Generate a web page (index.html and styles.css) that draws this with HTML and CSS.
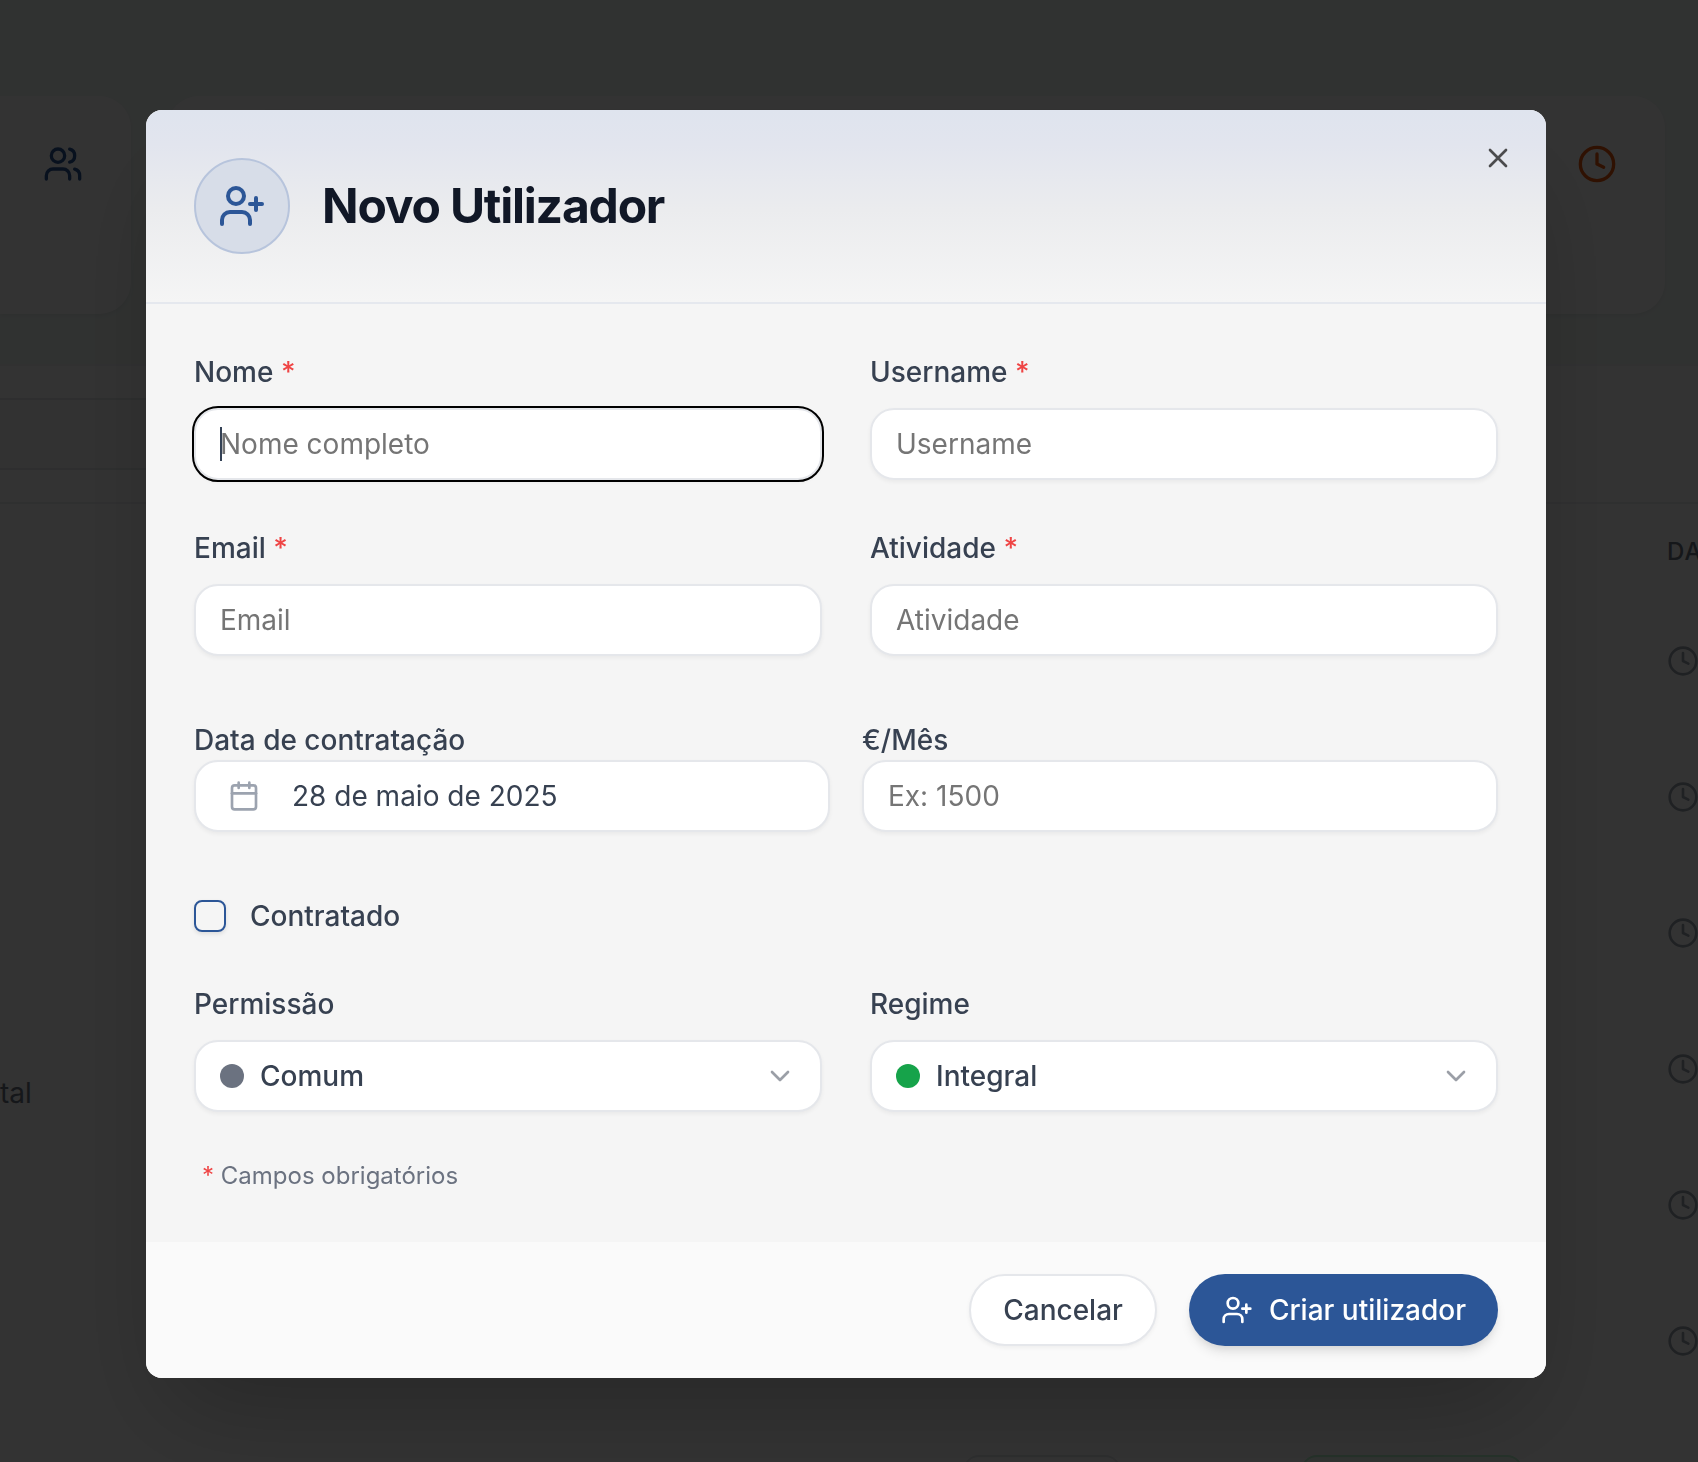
FILE: index.html
```html
<!DOCTYPE html>
<html lang="pt">
<head>
<meta charset="utf-8">
<meta name="viewport" content="width=device-width, initial-scale=1">
<title>Novo Utilizador</title>
<link rel="stylesheet" href="styles.css">
</head>
<body>
<svg class="sprite" aria-hidden="true">
  <symbol id="user-plus" viewBox="0 0 24 24"><path d="M16 21v-2a4 4 0 0 0-4-4H6a4 4 0 0 0-4 4v2"/><circle cx="9" cy="7" r="4"/><path d="M19 8v6M22 11h-6"/></symbol>
  <symbol id="users" viewBox="0 0 24 24"><path d="M16 21v-2a4 4 0 0 0-4-4H6a4 4 0 0 0-4 4v2"/><circle cx="9" cy="7" r="4"/><path d="M22 21v-2a4 4 0 0 0-3-3.87M16 3.13a4 4 0 0 1 0 7.75"/></symbol>
  <symbol id="clock" viewBox="0 0 24 24"><circle cx="12" cy="12" r="10"/><path d="M12 6v6l4 2"/></symbol>
  <symbol id="calendar" viewBox="0 0 24 24"><path d="M8 2v4M16 2v4"/><rect width="18" height="18" x="3" y="4" rx="2"/><path d="M3 10h18"/></symbol>
  <symbol id="chevron" viewBox="0 0 24 24"><path d="m6 9 6 6 6-6"/></symbol>
  <symbol id="close" viewBox="0 0 24 24"><path d="M18 6 6 18M6 6l12 12"/></symbol>
</svg>

<main class="page" inert>
  <div class="stats">
    <section class="stat stat-first"><svg class="icon icon-40 blue"><use href="#users"/></svg></section>
    <section class="stat stat-last"><svg class="icon icon-40 orange"><use href="#clock"/></svg></section>
  </div>
  <section class="panel">
    <div class="toolbar"><div class="search"></div></div>
    <table class="users">
      <thead><tr><th></th><th class="col-state"></th><th class="col-plan"></th><th class="when">DATA</th></tr></thead>
      <tbody>
        <tr><td></td><td></td><td></td><td class="when"><svg class="icon icon-32"><use href="#clock"/></svg></td></tr>
        <tr><td></td><td></td><td></td><td class="when"><svg class="icon icon-32"><use href="#clock"/></svg></td></tr>
        <tr><td></td><td></td><td></td><td class="when"><svg class="icon icon-32"><use href="#clock"/></svg></td></tr>
        <tr><td class="role">tal</td><td></td><td></td><td class="when"><svg class="icon icon-32"><use href="#clock"/></svg></td></tr>
        <tr><td></td><td></td><td></td><td class="when"><svg class="icon icon-32"><use href="#clock"/></svg></td></tr>
        <tr><td></td><td></td><td></td><td class="when"><svg class="icon icon-32"><use href="#clock"/></svg></td></tr>
        <tr><td></td><td><span class="tag tag-gray"></span></td><td><span class="tag tag-green"></span></td><td class="when"></td></tr>
      </tbody>
    </table>
  </section>
</main>

<div class="overlay">
  <form class="dialog" role="dialog" aria-modal="true" aria-labelledby="title">
    <header class="head">
      <span class="avatar"><svg class="icon icon-48"><use href="#user-plus"/></svg></span>
      <h1 id="title">Novo Utilizador</h1>
      <button class="close" type="button" aria-label="Fechar"><svg class="icon icon-32"><use href="#close"/></svg></button>
    </header>

    <div class="body">
      <div class="row">
        <div class="field">
          <label for="nome">Nome <span class="req">*</span></label>
          <input class="control" id="nome" type="text" placeholder="Nome completo" autofocus>
        </div>
        <div class="field">
          <label for="username">Username <span class="req">*</span></label>
          <input class="control" id="username" type="text" placeholder="Username">
        </div>
      </div>
      <div class="row">
        <div class="field">
          <label for="email">Email <span class="req">*</span></label>
          <input class="control" id="email" type="email" placeholder="Email">
        </div>
        <div class="field">
          <label for="atividade">Atividade <span class="req">*</span></label>
          <input class="control" id="atividade" type="text" placeholder="Atividade">
        </div>
      </div>
      <div class="row row-tight">
        <div class="field">
          <label for="data">Data de contratação</label>
          <button class="control date" id="data" type="button"><svg class="icon icon-32"><use href="#calendar"/></svg>28 de maio de 2025</button>
        </div>
        <div class="field">
          <label for="salario">€/Mês</label>
          <input class="control" id="salario" type="text" inputmode="decimal" placeholder="Ex: 1500">
        </div>
      </div>
      <div class="check">
        <input id="contratado" type="checkbox">
        <label for="contratado">Contratado</label>
      </div>
      <div class="row">
        <div class="field">
          <label for="permissao">Permissão</label>
          <div class="select">
            <span class="dot"></span>
            <select class="control" id="permissao"><option>Comum</option></select>
            <svg class="icon icon-32"><use href="#chevron"/></svg>
          </div>
        </div>
        <div class="field">
          <label for="regime">Regime</label>
          <div class="select">
            <span class="dot dot-green"></span>
            <select class="control" id="regime"><option>Integral</option></select>
            <svg class="icon icon-32"><use href="#chevron"/></svg>
          </div>
        </div>
      </div>
      <p class="note"><span class="req">*</span> Campos obrigatórios</p>
    </div>

    <footer class="foot">
      <button class="btn" type="button">Cancelar</button>
      <button class="btn btn-primary" type="submit"><svg class="icon icon-32"><use href="#user-plus"/></svg>Criar utilizador</button>
    </footer>
  </form>
</div>
</body>
</html>
```
FILE: styles.css
```css
*, *::before, *::after { box-sizing: border-box; }

body {
  margin: 0;
  background: #f1f8f5;
  color: #374151;
  font: 400 28px/40px Inter, "Liberation Sans", sans-serif;
}

h1, p { margin: 0; }
button, input, select { font: inherit; color: inherit; }

.sprite { position: absolute; width: 0; height: 0; }

.icon {
  display: block;
  flex: none;
  fill: none;
  stroke: currentColor;
  stroke-width: 2;
  stroke-linecap: round;
  stroke-linejoin: round;
}
.icon-32 { width: 32px; height: 32px; }
.icon-40 { width: 40px; height: 40px; }
.icon-48 { width: 48px; height: 48px; }
.blue { color: #2c5697; }
.orange { color: #ea580c; }

/* page behind the dialog */
.page { height: 100vh; padding-top: 96px; overflow: hidden; }
.stats { display: flex; gap: 36px; padding-right: 33px; margin-bottom: 50px; }
.stat {
  display: flex;
  justify-content: flex-end;
  height: 218px;
  padding: 48px;
  background: #fff;
  border-radius: 32px;
  box-shadow: 0 2px 4px rgba(0, 0, 0, .06);
}
.stat-first { flex: none; width: 131px; border-radius: 0 32px 32px 0; }
.stat-last { flex: 1; }
.panel { background: #fff; border-top: 2px solid #f3f4f6; }
.toolbar { padding: 32px 0; border-bottom: 2px solid #eceef1; }
.search { width: 40%; height: 72px; background: #fafafa; border: solid #e5e7eb; border-width: 2px 0; }
.users { width: 100%; border-collapse: collapse; table-layout: fixed; }
.users th, .users td { height: 136px; padding: 0; text-align: left; }
.users th { height: 89px; padding-top: 6px; color: #6b7280; font-size: 24px; font-weight: 500; line-height: 32px; letter-spacing: 1px; }
.users .col-state { width: 338px; }
.users .col-plan { width: 366px; }
.users .when { width: 31px; color: #9ca3af; overflow: hidden; }
.users th.when { color: #6b7280; }
.users .role { padding-top: 48px; color: #6b7280; }
.tag { display: block; height: 44px; border: 2px solid #e5e7eb; border-radius: 16px; }
.tag-gray { width: 158px; }
.tag-green { width: 222px; border-color: #bbf7d0; background: #f0fdf4; }

/* dialog */
.overlay {
  position: fixed;
  inset: 0;
  padding: 110px 152px 84px 146px;
  background: rgba(0, 0, 0, .8);
}
.dialog {
  background: #f5f5f5;
  border-radius: 16px;
  box-shadow: 0 50px 100px -24px rgba(0, 0, 0, .25);
}
.head {
  position: relative;
  display: flex;
  align-items: center;
  gap: 32px;
  padding: 48px;
  border-bottom: 2px solid #e5e8ee;
  border-radius: 16px 16px 0 0;
  background: linear-gradient(#dfe4ee, #e2e5ee 18%, #ebecee 52%, #f5f5f5);
}
.avatar {
  display: grid;
  place-items: center;
  width: 96px;
  height: 96px;
  border: 2px solid #b7c4dc;
  border-radius: 50%;
  background: #d7dde8;
  color: #2c5697;
}
h1 { color: #111827; font-size: 48px; line-height: 60px; font-weight: 700; letter-spacing: -.025em; }
.close {
  position: absolute;
  top: 32px;
  right: 32px;
  padding: 0;
  border: 0;
  background: none;
  color: #4b4b4d;
}

.body { display: flex; flex-direction: column; gap: 48px; padding: 48px 48px 50px; }
.row { display: grid; grid-template-columns: 1fr 1fr; gap: 48px; }
.field { display: flex; flex-direction: column; gap: 16px; }
.row-tight { gap: 32px; margin: 16px 0; }
.row-tight .field { gap: 0; }
label { font-weight: 500; }
.req { color: #ef4444; }

.control {
  width: 100%;
  height: 72px;
  padding: 0 24px;
  border: 2px solid #e5e7eb;
  border-radius: 24px;
  background: #fff;
  box-shadow: 0 2px 4px rgba(0, 0, 0, .05);
  appearance: none;
}
.control::placeholder { color: #757575; opacity: 1; }
.control:focus { outline: 2px solid #000; }
/* steady two-pixel caret while the focused box is empty */
.control:focus:placeholder-shown {
  background: linear-gradient(#334155, #334155) 24px center / 2px 34px no-repeat #fff;
  caret-color: transparent;
}
.date { display: flex; align-items: center; gap: 32px; padding: 0 32px; }
.date .icon { color: #9ca3af; }

.check { display: flex; align-items: center; gap: 24px; }
.check input {
  width: 32px;
  height: 32px;
  margin: 0;
  border: 2px solid #2c5697;
  border-radius: 8px;
  box-shadow: 0 2px 4px rgba(0, 0, 0, .1);
  appearance: none;
}

.select { position: relative; }
.select .control { padding-left: 64px; font-weight: 500; }
.select .dot, .select .icon { position: absolute; pointer-events: none; }
.select .dot { top: 24px; left: 26px; }
.select .icon { top: 20px; right: 26px; color: #9b9fa7; }
.dot { width: 24px; height: 24px; border-radius: 50%; background: #6b7280; }
.dot-green { background: #16a34a; }

.note { padding-left: 8px; color: #6b7280; font-size: 24px; line-height: 32px; }

.foot {
  display: flex;
  justify-content: flex-end;
  gap: 32px;
  padding: 32px 48px;
  border-radius: 0 0 16px 16px;
  background: #fafafa;
}
.btn {
  display: flex;
  align-items: center;
  gap: 16px;
  height: 72px;
  padding: 0 32px;
  border: 2px solid #e5e7eb;
  border-radius: 36px;
  background: #fff;
  box-shadow: 0 2px 4px rgba(0, 0, 0, .05);
  font-weight: 500;
}
.btn-primary {
  border: 0;
  background: #2c5697;
  color: #fff;
  box-shadow: 0 8px 12px -2px rgba(0, 0, 0, .1), 0 4px 8px -4px rgba(0, 0, 0, .1);
}
```
